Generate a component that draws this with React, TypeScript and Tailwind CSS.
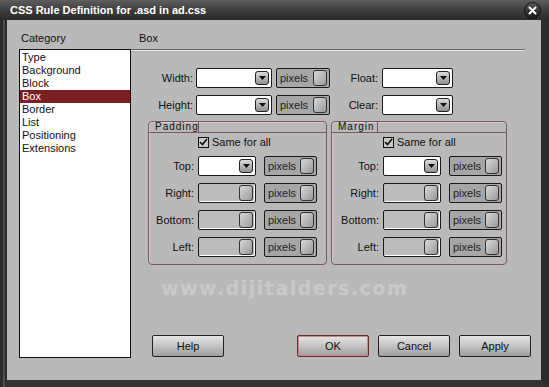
import React from "react";

const font = { fontFamily: '"Liberation Sans", Arial, sans-serif' };

function DropBtn() {
  return (
    <div className="w-[14px] h-[14px] rounded-[3px] border border-[#222] bg-gradient-to-b from-[#dcdcdc] to-[#8f8f8f] flex items-center justify-center shrink-0">
      <svg width="7" height="4" viewBox="0 0 7 4"><path d="M0 0h7L3.5 4z" fill="#111" /></svg>
    </div>
  );
}

function SquareBtn() {
  return (
    <div className="w-[14px] h-[16px] rounded-[3px] border border-[#333] bg-gradient-to-br from-[#d8d8d8] to-[#9a9a9a] shrink-0" />
  );
}

function Select({ w, disabled }: { w: string; disabled?: boolean }) {
  return (
    <div
      className={`${w} h-[20px] rounded-[2px] border border-[#1a1a1a] flex items-center justify-end pr-[2px] ${
        disabled ? "bg-[#bcbcbc] shadow-[inset_-1px_-1px_0_#fff]" : "bg-white"
      }`}
    >
      {disabled ? <SquareBtn /> : <DropBtn />}
    </div>
  );
}

function Pixels({ w }: { w: string }) {
  return (
    <div className={`${w} h-[20px] rounded-[2px] border border-[#1a1a1a] bg-[#a6a6a6] flex items-center justify-between pl-[3px] pr-[2px] text-[11px] text-[#222]`}>
      <span>pixels</span>
      <SquareBtn />
    </div>
  );
}

function Row({ label, lw, disabled }: { label: string; lw: string; disabled?: boolean }) {
  return (
    <div className="flex items-center h-[20px]">
      <div className={`${lw} text-right text-[11px] text-[#111]`}>{label}</div>
      <div className="ml-[4px]">
        <Select w="w-[58px]" disabled={disabled} />
      </div>
      <div className="ml-[8px]">
        <Pixels w="w-[53px]" />
      </div>
    </div>
  );
}

function Group({ title, w, lw, tab }: { title: string; w: string; lw: string; tab: string }) {
  return (
    <div className={`${w} h-[144px] rounded-[4px] border border-[#7a5a5e] shadow-[inset_1px_1px_0_#d8c8c8] flex flex-col`}>
      <div className="h-[11px] border-b border-[#7a5a5e] flex">
        <div className={`${tab} h-[11px] border-r border-[#7a5a5e] text-[10px] leading-[10px] pl-[6px] tracking-[1px] text-[#111]`}>
          {title}
        </div>
      </div>
      <div className="flex items-center h-[12px] mt-[3px]">
        <div className={`${lw}`} />
        <div className="ml-[4px] w-[11px] h-[11px] border border-[#111] bg-[#c8c8c8] flex items-center justify-center">
          <svg width="9" height="8" viewBox="0 0 9 8"><path d="M1 4l2.5 2.5L8 1" stroke="#111" strokeWidth="1.6" fill="none" /></svg>
        </div>
        <span className="ml-[3px] text-[11px] text-[#111]">Same for all</span>
      </div>
      <div className="mt-[8px] flex flex-col gap-[7px]">
        <Row label="Top:" lw={lw} />
        <Row label="Right:" lw={lw} disabled />
        <Row label="Bottom:" lw={lw} disabled />
        <Row label="Left:" lw={lw} disabled />
      </div>
    </div>
  );
}

function Btn({ label, ok }: { label: string; ok?: boolean }) {
  return (
    <div
      className={`w-[72px] h-[22px] shrink-0 rounded-[2px] border flex items-center justify-center text-[11px] text-[#111] bg-gradient-to-b from-[#e6e6e6] via-[#c4c4c4] to-[#9e9e9e] ${
        ok ? "border-[#6e2a2e] shadow-[inset_0_0_0_1px_#c58a8e]" : "border-[#222]"
      }`}
    >
      {label}
    </div>
  );
}

export default function App() {
  const cats = ["Type", "Background", "Block", "Box", "Border", "List", "Positioning", "Extensions"];
  return (
    <div style={font} className="w-[549px] h-[387px] bg-[#2f2f2f] flex flex-col overflow-hidden">
      <div className="h-[20px] shrink-0 bg-gradient-to-b from-[#5e5e5e] via-[#3e3e3e] to-[#2a2a2a] flex items-center justify-between pl-[10px] pr-[8px]">
        <span className="text-white font-bold text-[11px] leading-none">CSS Rule Definition for .asd in ad.css</span>
        <div className="w-[17px] h-[17px] rounded-full bg-gradient-to-b from-[#555] to-[#1a1a1a] border border-[#111] flex items-center justify-center">
          <svg width="9" height="9" viewBox="0 0 9 9"><path d="M1.5 1.5l6 6M7.5 1.5l-6 6" stroke="#fff" strokeWidth="2" strokeLinecap="round" /></svg>
        </div>
      </div>
      <div className="flex-1 flex border-l-[3px] border-[#2c2c2c] pl-[2px] bg-[#4e4e4e]">
        <div className="flex-1 flex border-l-[2px] border-[#2c2c2c] border-r-[8px] border-b-[7px] border-b-[#333] bg-[#b9b9b9] pt-[11px]">
          <div className="w-[124px] pl-[12px] flex flex-col shrink-0">
            <div className="h-[18px] text-[11px] text-[#111] pl-[2px] leading-[14px]">Category</div>
            <div className="w-[112px] h-[309px] bg-white border border-[#111] flex flex-col pt-[1px] text-[11px] leading-[13px] text-[#111]">
              {cats.map((c) => (
                <div key={c} className={`pl-[2px] h-[13px] ${c === "Box" ? "bg-[#7c1f22] text-white" : ""}`}>
                  {c}
                </div>
              ))}
            </div>
          </div>
          <div className="flex-1 flex flex-col">
            <div className="h-[18px] text-[11px] text-[#111] pl-[8px] leading-[14px]">Box</div>
            <div className="w-[394px] h-[2px] border-t border-[#666] border-b border-b-[#e6e6e6]" />
            <div className="mt-[17px] flex flex-col gap-[7px]">
              {[
                ["Width:", "Float:"],
                ["Height:", "Clear:"],
              ].map(([a, b]) => (
                <div key={a} className="flex items-center h-[20px]">
                  <div className="w-[62px] text-right text-[11px] text-[#111]">{a}</div>
                  <div className="ml-[3px]"><Select w="w-[76px]" /></div>
                  <div className="ml-[4px]"><Pixels w="w-[54px]" /></div>
                  <div className="w-[48px] text-right text-[11px] text-[#111]">{b}</div>
                  <div className="ml-[4px]"><Select w="w-[71px]" /></div>
                </div>
              ))}
            </div>
            <div className="mt-[6px] ml-[17px] flex gap-[4px]">
              <Group title="Padding" w="w-[179px]" lw="w-[45px]" tab="w-[50px]" />
              <Group title="Margin" w="w-[176px]" lw="w-[47px]" tab="w-[46px]" />
            </div>
            <div className="mt-[12px] ml-[30px] h-[22px] text-[19px] font-bold tracking-[1.5px] text-[#c9c9c9] leading-[22px]" style={{ fontFamily: '"DejaVu Sans", sans-serif' }}>
              www.dijitalders.com
            </div>
            <div className="mt-[36px] flex items-center pl-[21px]">
              <Btn label="Help" />
              <div className="ml-[73px] flex gap-[9px]">
                <Btn label="OK" ok />
                <Btn label="Cancel" />
                <Btn label="Apply" />
              </div>
            </div>
          </div>
        </div>
      </div>
    </div>
  );
}
